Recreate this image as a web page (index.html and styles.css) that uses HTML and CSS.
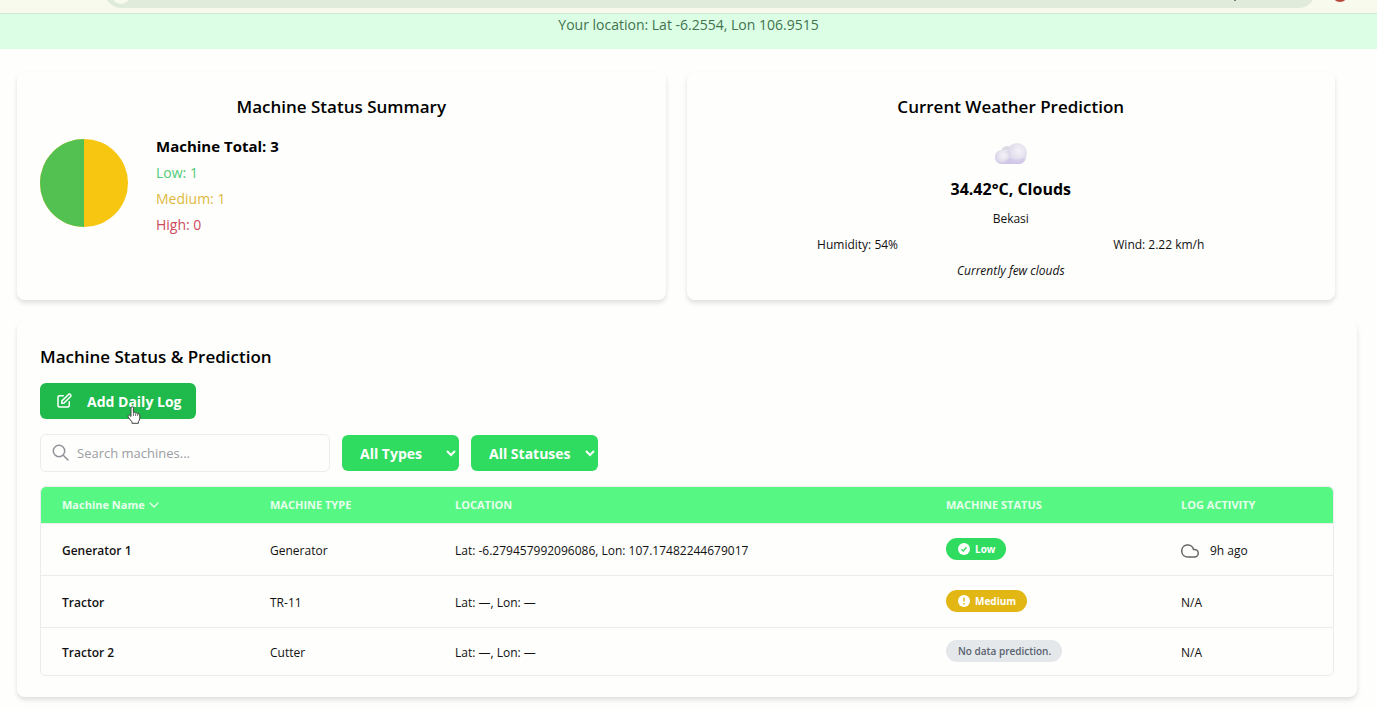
FILE: index.html
```html
<!DOCTYPE html>
<html lang="en">
<head>
    <meta charset="UTF-8">
    <meta name="viewport" content="width=device-width, initial-scale=1.0">
    <title>Machine Dashboard</title>
    <link rel="stylesheet" href="styles.css">
</head>
<body>
    <div class="browser-bar">
        <div class="address">
            <span class="site-icon"></span>
            <span class="address-mark"></span>
        </div>
        <span class="avatar"></span>
    </div>

    <div class="location-banner">Your location: Lat -6.2554, Lon 106.9515</div>

    <main class="dashboard">
        <div class="cards">
            <!-- Status summary -->
            <section class="card">
                <h2 class="card-title">Machine Status Summary</h2>
                <div class="summary">
                    <svg class="pie" viewBox="0 0 88 88" aria-hidden="true">
                        <circle cx="44" cy="44" r="44" fill="#f6c610"/>
                        <path d="M44 0a44 44 0 0 0 0 88z" fill="#53c152"/>
                    </svg>
                    <div class="summary-list">
                        <p class="total">Machine Total: 3</p>
                        <p class="low">Low: 1</p>
                        <p class="medium">Medium: 1</p>
                        <p class="high">High: 0</p>
                    </div>
                </div>
            </section>

            <!-- Weather -->
            <section class="card weather">
                <h2 class="card-title">Current Weather Prediction</h2>
                <div class="weather-icon">
                    <svg width="34" height="24" viewBox="0 0 34 24" aria-hidden="true">
                        <defs>
                            <linearGradient id="base" x1="0" y1="0" x2="0" y2="1">
                                <stop offset="0" stop-color="#ebe8f2"/>
                                <stop offset="1" stop-color="#cec5e8"/>
                            </linearGradient>
                            <radialGradient id="puff" cx="0.6" cy="0.38" r="0.7">
                                <stop offset="0" stop-color="#f4f3f7"/>
                                <stop offset="0.6" stop-color="#e3dfed"/>
                                <stop offset="1" stop-color="#d3cce8"/>
                            </radialGradient>
                        </defs>
                        <circle cx="13" cy="10" r="6" fill="#dddbe2"/>
                        <rect x="1" y="8" width="31" height="14" rx="7" fill="url(#base)"/>
                        <circle cx="23" cy="11" r="10" fill="url(#puff)"/>
                        <circle cx="8" cy="15" r="7" fill="url(#puff)"/>
                        <path d="M5 21q6-1 10-5q8 4 16-1q-2 7-8 7H8z" fill="#cec5e8" opacity="0.6"/>
                    </svg>
                </div>
                <p class="temperature">34.42°C, Clouds</p>
                <p>Bekasi</p>
                <div class="weather-details">
                    <span>Humidity: 54%</span>
                    <span>Wind: 2.22 km/h</span>
                </div>
                <p class="description">Currently few clouds</p>
            </section>
        </div>

        <section class="card machines">
            <h2 class="card-title">Machine Status &amp; Prediction</h2>
            <button class="add-log" type="button">
                <svg width="18" height="18" viewBox="0 0 24 24" fill="none" stroke="currentColor" stroke-width="2" stroke-linecap="round" stroke-linejoin="round" aria-hidden="true">
                    <path d="M11 5H6a2 2 0 0 0-2 2v11a2 2 0 0 0 2 2h11a2 2 0 0 0 2-2v-5"/>
                    <path d="M17.6 3.6a2 2 0 1 1 2.8 2.8L11.8 15H9v-2.8z"/>
                </svg>
                Add Daily Log
                <svg class="pointer" width="14" height="18" viewBox="0 0 14 18" aria-hidden="true">
                    <path d="M4 9V2q0-1.300 1.200-1.300T6.400 2v4.500q1.800-.6 2.200.5q1.600-.5 2 .6q2.200-.4 2.200 1.400v3.200q0 2-1.400 3.600v1.500H5v-1.400Q3.500 14.500 1.200 11q-.8-1.300.3-1.800T4 10.500z" fill="#fff" stroke="#444" stroke-linejoin="round"/>
                    <path d="M6.500 7v3M8.600 7.500V10M10.600 8v2" stroke="#777" fill="none"/>
                </svg>
            </button>

            <div class="filters">
                <div class="search">
                    <svg width="18" height="18" viewBox="0 0 18 18" fill="none" stroke="currentColor" stroke-width="1.500" stroke-linecap="round" aria-hidden="true">
                        <circle cx="7" cy="7" r="5.700"/>
                        <path d="M11.500 11.500l4.500 4.500"/>
                    </svg>
                    <input type="text" placeholder="Search machines..." aria-label="Search machines">
                </div>
                <select class="types" aria-label="Machine type">
                    <option>All Types</option>
                    <option>Generator</option>
                    <option>TR-11</option>
                    <option>Cutter</option>
                </select>
                <select class="statuses" aria-label="Machine status">
                    <option>All Statuses</option>
                    <option>Low</option>
                    <option>Medium</option>
                    <option>High</option>
                </select>
            </div>

            <div class="table-wrap">
                <table>
                    <thead>
                        <tr>
                            <th class="col-name">Machine Name
                                <svg width="12" height="8" viewBox="0 0 12 8" fill="none" stroke="currentColor" stroke-width="1.300" stroke-linecap="round" stroke-linejoin="round" aria-hidden="true"><path d="M2 2l4 4 4-4"/></svg>
                            </th>
                            <th class="col-type">MACHINE TYPE</th>
                            <th>LOCATION</th>
                            <th class="col-status">MACHINE STATUS</th>
                            <th class="col-log">LOG ACTIVITY</th>
                        </tr>
                    </thead>
                    <tbody>
                        <tr>
                            <td class="name">Generator 1</td>
                            <td>Generator</td>
                            <td>Lat: -6.279457992096086, Lon: 107.17482244679017</td>
                            <td class="status">
                                <span class="badge badge-low">
                                    <svg width="12" height="12" viewBox="0 0 12 12" aria-hidden="true"><circle cx="6" cy="6" r="6" fill="#fff"/><path d="M3.500 6.200l1.800 1.800 3.200-3.700" fill="none" stroke="#2fdc60" stroke-width="1.400"/></svg>
                                    Low
                                </span>
                            </td>
                            <td>
                                <span class="activity">
                                    <svg width="18" height="14" viewBox="0 3 24 18" fill="none" stroke="#666" stroke-width="2" stroke-linejoin="round" aria-hidden="true"><path d="M18 10h-1.260A8 8 0 1 0 9 20h9a5 5 0 0 0 0-10z"/></svg>
                                    9h ago
                                </span>
                            </td>
                        </tr>
                        <tr>
                            <td class="name">Tractor</td>
                            <td>TR-11</td>
                            <td>Lat: —, Lon: —</td>
                            <td class="status">
                                <span class="badge badge-medium">
                                    <svg width="12" height="12" viewBox="0 0 12 12" aria-hidden="true"><circle cx="6" cy="6" r="6" fill="#fff"/><path d="M6 2.600v4M6 8v1.400" stroke="#e2b714" stroke-width="1.400"/></svg>
                                    Medium
                                </span>
                            </td>
                            <td>N/A</td>
                        </tr>
                        <tr>
                            <td class="name">Tractor 2</td>
                            <td>Cutter</td>
                            <td>Lat: —, Lon: —</td>
                            <td class="status"><span class="badge badge-none">No data prediction.</span></td>
                            <td>N/A</td>
                        </tr>
                    </tbody>
                </table>
            </div>
        </section>
    </main>
</body>
</html>
```
FILE: styles.css
```css
:root {
    --page: #fefefc;
    --green: #2fdc60;
    --green-dark: #1fba4b;
    --green-head: #57f784;
    --yellow: #e2b714;
    --line: #ececee;
}

* {
    box-sizing: border-box;
    margin: 0;
    padding: 0;
}

body {
    background-color: var(--page);
    color: #111;
    font-family: 'Segoe UI', 'Open Sans', 'Noto Sans', sans-serif;
    font-size: 12px;
    line-height: 26px;
}

button,
input,
select {
    font-family: inherit;
}

svg {
    flex-shrink: 0;
}

/* Bottom edge of the browser toolbar */
.browser-bar {
    display: flex;
    align-items: flex-start;
    gap: 17px;
    height: 14px;
    padding: 0 29px 0 105px;
    background-color: #f7faec;
    border-bottom: 1px solid #d3e6d5;
    overflow: hidden;
}

.address {
    flex: 1;
    display: flex;
    align-items: flex-end;
    justify-content: space-between;
    height: 32px;
    margin-top: -24px;
    padding: 0 79px 4px 7px;
    background-color: #e0ebdc;
    border-radius: 16px;
}

.site-icon {
    width: 18px;
    height: 18px;
    background-color: #f7faec;
    border-radius: 50%;
}

.address-mark {
    width: 2px;
    height: 5px;
    margin-bottom: 3px;
    background-color: #777;
}

.avatar {
    width: 16px;
    height: 16px;
    margin-top: -14px;
    background-color: #b5473a;
    border-radius: 50%;
}

.location-banner {
    padding-bottom: 14px;
    background-color: #dcfee5;
    color: #3f7350;
    font-size: 14px;
    line-height: 21px;
    text-align: center;
}

.dashboard {
    padding: 23px 20px 10px 17px;
}

.cards {
    display: grid;
    grid-template-columns: 1fr 1fr;
    gap: 21px;
    margin: 0 22px 21px 0;
}

.card {
    padding: 22px 23px 16px;
    background-color: var(--page);
    border-radius: 8px;
    box-shadow: 0 3px 5px rgba(0, 0, 0, 0.12);
}

.card-title {
    margin-bottom: 12px;
    color: #000;
    font-size: 17px;
    font-weight: 600;
    line-height: 26px;
    text-align: center;
}

.summary {
    display: flex;
    gap: 28px;
}

.pie {
    width: 88px;
    height: 88px;
    margin-top: 7px;
}

.summary-list {
    font-size: 14px;
}

.total,
.temperature {
    color: #000;
    font-weight: 700;
    line-height: 28px;
}

.total {
    font-size: 15px;
}

.low {
    color: #4ecb78;
}

.medium {
    color: #dfb93c;
}

.high {
    color: #cd4a5c;
}

.weather {
    text-align: center;
}

.weather-icon {
    display: flex;
    align-items: center;
    justify-content: center;
    height: 43px;
}

.temperature {
    margin-bottom: 3px;
    font-size: 16px;
}

.weather-details {
    display: flex;
    justify-content: space-around;
}

.description {
    font-style: italic;
}

/* Machine list */
.machines {
    padding-bottom: 21px;
}

.machines .card-title {
    line-height: 28px;
    text-align: left;
}

.add-log {
    position: relative;
    display: flex;
    align-items: center;
    gap: 14px;
    height: 36px;
    padding: 0 15px;
    background-color: var(--green-dark);
    border: none;
    border-radius: 6px;
    color: #fff;
    font-size: 14px;
    font-weight: 700;
    cursor: pointer;
}

.pointer {
    position: absolute;
    left: 87px;
    top: 23px;
}

.filters {
    display: flex;
    align-items: center;
    gap: 12px;
    margin: 15px 0 14px;
}

.search {
    display: flex;
    align-items: center;
    gap: 7px;
    width: 290px;
    height: 38px;
    padding: 0 11px;
    border: 1px solid var(--line);
    border-radius: 6px;
    color: #8f9399;
}

.search input {
    flex: 1;
    min-width: 0;
    background: none;
    border: none;
    outline: none;
    font-size: 13px;
}

.search input::placeholder {
    color: #9a9da3;
}

select {
    height: 36px;
    padding: 0 0 0 14px;
    background-color: var(--green);
    border: none;
    border-radius: 6px;
    color: #fff;
    font-size: 14px;
    font-weight: 700;
}

.types {
    width: 117px;
}

.statuses {
    width: 127px;
}

.table-wrap {
    border: 1px solid var(--line);
    border-radius: 6px;
    overflow: hidden;
}

table {
    width: 100%;
    border-collapse: collapse;
    table-layout: fixed;
}

th,
td {
    padding: 0 21px;
    text-align: left;
}

th {
    height: 36px;
    background-color: var(--green-head);
    color: #e6ffec;
    font-size: 11px;
    font-weight: 700;
}

td {
    height: 52px;
    padding-top: 3px;
    border-top: 1px solid var(--line);
}

tbody tr:last-child td {
    height: 48px;
}

.status {
    padding-top: 0;
}

.col-name {
    width: 208px;
}

.col-type {
    width: 185px;
}

.col-status {
    width: 235px;
}

.col-log {
    width: 173px;
}

.name {
    font-weight: 600;
}

.badge {
    display: flex;
    align-items: center;
    gap: 5px;
    width: fit-content;
    height: 22px;
    padding: 0 11px 0 12px;
    border-radius: 11px;
    color: #fff;
    font-size: 10px;
    font-weight: 700;
}

.badge-low {
    background-color: var(--green);
}

.badge-medium {
    background-color: var(--yellow);
}

.badge-none {
    background-color: #e4e8ea;
    color: #596270;
    font-weight: 600;
}

.activity {
    display: flex;
    align-items: center;
    gap: 11px;
}
```
